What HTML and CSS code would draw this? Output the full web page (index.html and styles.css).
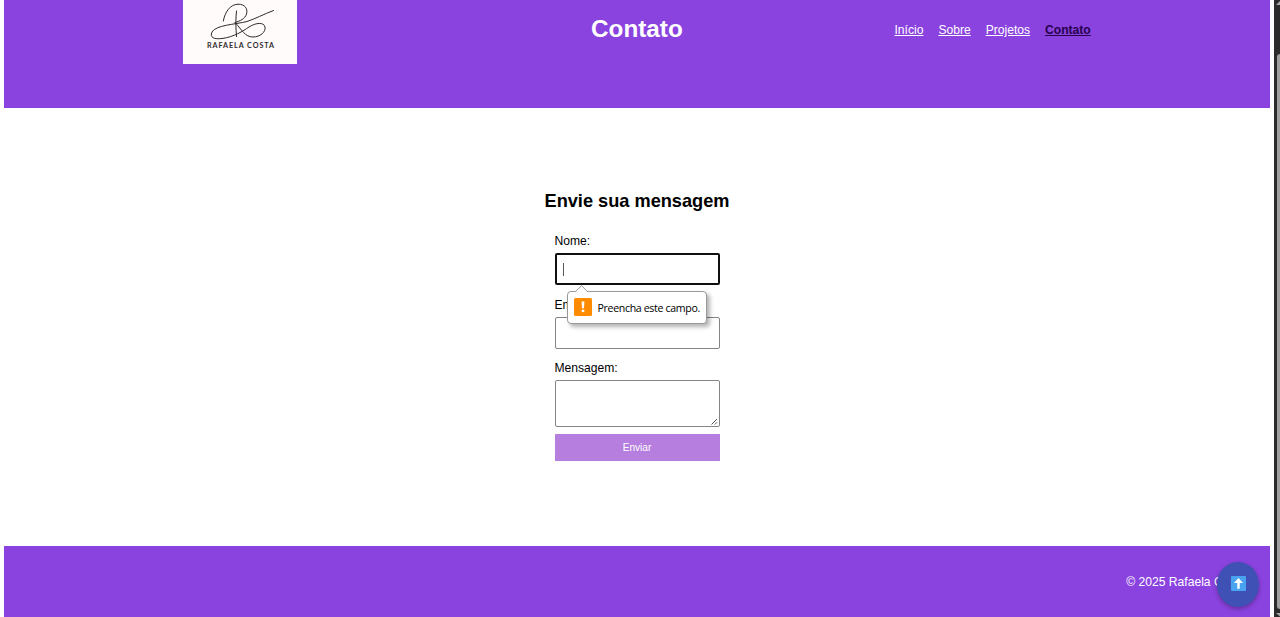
FILE: index.html
```html
<!DOCTYPE html>
<html lang="pt-BR">
<head>
<meta charset="utf-8">
<title>Contato</title>
<link rel="stylesheet" href="styles.css">
</head>
<body>
<div class="page">
  <header class="header">
    <div class="logo">
      <svg width="114" height="64" viewBox="0 0 114 64">
        <g fill="none" stroke="#2e2a2c" stroke-width="1" stroke-linecap="round">
          <path d="M40.300 21C42 12 47 4.500 55 4.200C62 4 65 9 63.500 14C62 19 57 21 52 22.500"/>
          <path d="M53.500 11C52.500 19 52.800 28 53.500 36.500"/>
          <path d="M90.500 10.500C80 14.500 73 18.500 64 21.500C52 24.500 33 25 29 32C26.500 37.500 31 39.500 39 38.500C51 37 60 31 66 27C73 22.500 81 22 82 27C83 32 77 37 70 37C62 37 59 30 52.500 23"/>
        </g>
        <text class="logo-name" x="24" y="47.800" textLength="67">RAFAELA COSTA</text>
      </svg>
    </div>
    <h1 class="title">Contato</h1>
    <nav class="nav">
      <a href="#">Início</a>
      <a href="#">Sobre</a>
      <a href="#">Projetos</a>
      <a href="#" class="active">Contato</a>
    </nav>
  </header>
  <main class="main">
    <h2 class="subtitle">Envie sua mensagem</h2>
    <form class="form">
      <label class="label">Nome:</label>
      <div class="field field-focus"><span class="caret"></span>
        <div class="tip">
          <svg class="tip-arrow" width="14" height="8" viewBox="0 0 14 8"><path d="M0 7.500L6.500 1L13 7.500V8H0z" fill="#fff"/><path d="M0.500 6.500L6.500 0.700L12.500 6.500" fill="none" stroke="#999"/></svg>
          <svg width="18" height="18" viewBox="0 0 18 18"><rect width="18" height="18" rx="1.500" fill="#ff8c00"/><path d="M7.600 3.500h2.800l-.4 6.800H8z" fill="#fff"/><rect x="7.700" y="11.700" width="2.600" height="2.400" fill="#fff"/></svg>
          <span class="tip-text">Preencha este campo.</span>
        </div>
      </div>
      <label class="label">Email:</label>
      <div class="field"></div>
      <label class="label">Mensagem:</label>
      <div class="field area"><svg width="7" height="7" viewBox="0 0 7 7"><path d="M0.500 6.500L6 1M3.800 6.500L6 4.300" stroke="#555" stroke-width="1" fill="none"/></svg></div>
      <button class="send" type="button">Enviar</button>
    </form>
  </main>
  <footer class="footer">© 2025 Rafaela Costa</footer>
</div>
<a class="to-top" href="#">
  <svg width="15" height="15" viewBox="0 0 15 15"><rect width="15" height="15" rx="1" fill="#49a3f0"/><path d="M7.500 2L12 7H8.700V12.800H6.300V7H3z" fill="#fff"/></svg>
</a>
<div class="scrollbar">
  <svg width="6" height="54" viewBox="0 0 6 54"><path d="M2 5L6 1V5z" fill="#aaa"/></svg>
  <div class="thumb"></div>
  <svg width="6" height="8" viewBox="0 0 6 8"><path d="M2 4H6V7.500z" fill="#aaa"/></svg>
</div>
</body>
</html>
```
FILE: styles.css
```css
* { box-sizing: border-box; }
body {
  margin: 0;
  height: 617px;
  display: flex;
  overflow: hidden;
  background: #fff;
  color: #000;
  font: 12.1px/14px "Liberation Sans", Arial, sans-serif;
}
.page {
  width: 1266px;
  margin: 0 4px;
  display: flex;
  flex-direction: column;
}
.header {
  height: 108px;
  flex: none;
  display: flex;
  align-items: flex-start;
  background: #8b43e0;
  color: #fff;
}
.logo {
  width: 114px;
  height: 64px;
  margin-left: 179px;
  background: #fefbfa;
}
.logo svg { display: block; }
.logo-name {
  font: bold 7.2px Lato, sans-serif;
  fill: #2e2a2c;
}
.title {
  width: 92px;
  margin: 15px 0 0 294px;
  font-size: 24.3px;
  line-height: 28px;
}
.nav {
  display: flex;
  gap: 15px;
  margin: 23px 0 0 211.5px;
}
.nav a { color: #fff; }
.nav .active { color: #26004d; font-weight: bold; }
.main {
  height: 438px;
  flex: none;
  display: flex;
  flex-direction: column;
  align-items: center;
  padding-top: 82px;
}
.subtitle {
  margin: 0 0 22px;
  font-size: 18.2px;
  line-height: 22px;
}
.form {
  width: 165px;
  display: flex;
  flex-direction: column;
}
.label { margin-bottom: 5px; }
.field {
  height: 32px;
  margin-bottom: 12.6px;
  border: 1px solid #858585;
  border-radius: 2px;
  background: #fff;
}
.field-focus {
  position: relative;
  border: 2px solid #101010;
}
.caret {
  display: block;
  width: 1px;
  height: 13px;
  margin: 8px 0 0 6px;
  background: #555;
}
.area {
  height: 47px;
  margin-bottom: 7px;
  display: flex;
  justify-content: flex-end;
  align-items: flex-end;
  padding: 1px;
}
.send {
  height: 27px;
  padding: 0;
  border: 0;
  background: #b57edf;
  color: #fff;
  font: 10.1px "Liberation Sans", Arial, sans-serif;
}
.tip {
  position: absolute;
  left: 10px;
  top: 36px;
  width: 140px;
  height: 33px;
  display: flex;
  align-items: center;
  gap: 6px;
  padding: 0 0 2px 6px;
  border: 1px solid #999;
  border-radius: 4px;
  background: #fff;
  box-shadow: 3px 3px 4px rgba(0, 0, 0, .3);
  z-index: 1;
}
.tip-arrow {
  position: absolute;
  left: 7px;
  top: -7px;
}
.tip-text {
  padding-top: 2px;
  font: 10.6px/14px "Open Sans", "Noto Sans", sans-serif;
  letter-spacing: -.34px;
  white-space: nowrap;
}
.footer {
  flex: 1;
  padding: 29px 24.5px 0 0;
  background: #8b43e0;
  color: #fff;
  text-align: right;
}
.to-top {
  position: absolute;
  left: 1217px;
  top: 562px;
  width: 42px;
  height: 45px;
  display: flex;
  align-items: center;
  justify-content: center;
  padding-bottom: 2px;
  border-radius: 50%;
  background: #3f51b5;
  box-shadow: 0 2px 5px rgba(0, 0, 0, .3);
}
.scrollbar {
  width: 6px;
  background: #2b2b2b;
  display: flex;
  flex-direction: column;
}
.thumb {
  height: 555px;
  margin-left: 3px;
  border-radius: 3px 0 0 3px;
  background: #9f9f9f;
}
```
